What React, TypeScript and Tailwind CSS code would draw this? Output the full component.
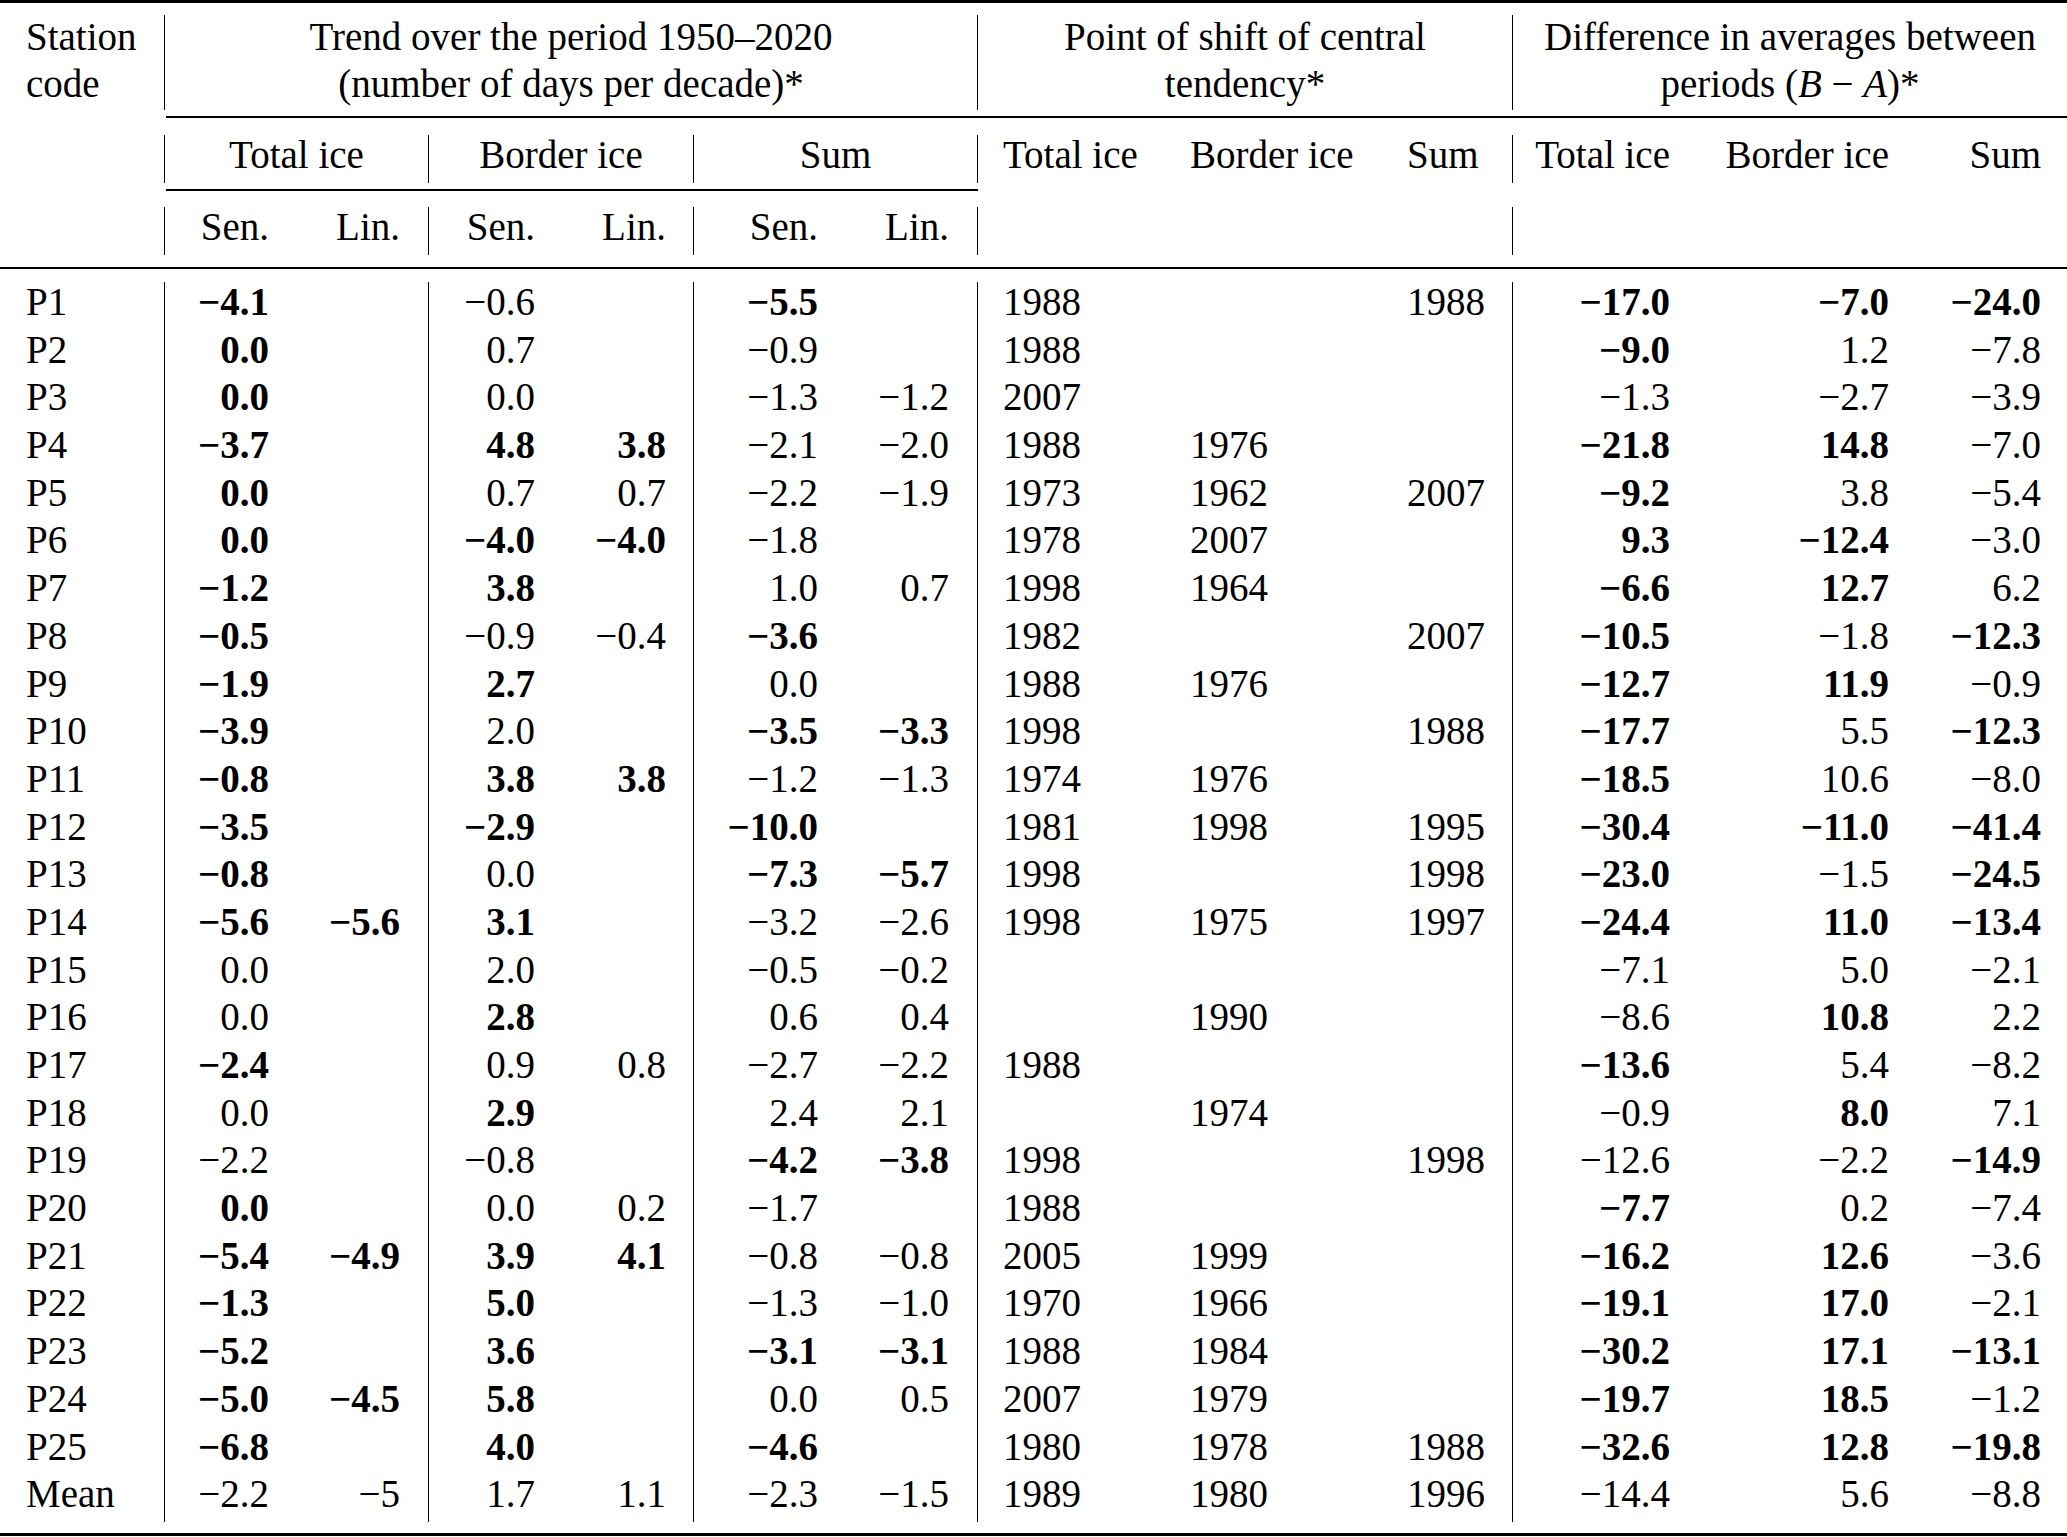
import React from "react";

// column widths follow the bars in the reference: 164 | 428 | 693 | 977 | 1512
const COLS =
  "grid grid-cols-[164px_136px_128px_137px_128px_155px_129px_188px_215px_132px_188px_218px_149px]";
const BAR = "border-l border-black";

// "*" marks a bold value, "-" is printed as a minus sign
const rows = [
  "P1|*-4.1||-0.6||*-5.5||1988||1988|*-17.0|*-7.0|*-24.0",
  "P2|*0.0||0.7||-0.9||1988|||*-9.0|1.2|-7.8",
  "P3|*0.0||0.0||-1.3|-1.2|2007|||-1.3|-2.7|-3.9",
  "P4|*-3.7||*4.8|*3.8|-2.1|-2.0|1988|1976||*-21.8|*14.8|-7.0",
  "P5|*0.0||0.7|0.7|-2.2|-1.9|1973|1962|2007|*-9.2|3.8|-5.4",
  "P6|*0.0||*-4.0|*-4.0|-1.8||1978|2007||*9.3|*-12.4|-3.0",
  "P7|*-1.2||*3.8||1.0|0.7|1998|1964||*-6.6|*12.7|6.2",
  "P8|*-0.5||-0.9|-0.4|*-3.6||1982||2007|*-10.5|-1.8|*-12.3",
  "P9|*-1.9||*2.7||0.0||1988|1976||*-12.7|*11.9|-0.9",
  "P10|*-3.9||2.0||*-3.5|*-3.3|1998||1988|*-17.7|5.5|*-12.3",
  "P11|*-0.8||*3.8|*3.8|-1.2|-1.3|1974|1976||*-18.5|10.6|-8.0",
  "P12|*-3.5||*-2.9||*-10.0||1981|1998|1995|*-30.4|*-11.0|*-41.4",
  "P13|*-0.8||0.0||*-7.3|*-5.7|1998||1998|*-23.0|-1.5|*-24.5",
  "P14|*-5.6|*-5.6|*3.1||-3.2|-2.6|1998|1975|1997|*-24.4|*11.0|*-13.4",
  "P15|0.0||2.0||-0.5|-0.2||||-7.1|5.0|-2.1",
  "P16|0.0||*2.8||0.6|0.4||1990||-8.6|*10.8|2.2",
  "P17|*-2.4||0.9|0.8|-2.7|-2.2|1988|||*-13.6|5.4|-8.2",
  "P18|0.0||*2.9||2.4|2.1||1974||-0.9|*8.0|7.1",
  "P19|-2.2||-0.8||*-4.2|*-3.8|1998||1998|-12.6|-2.2|*-14.9",
  "P20|*0.0||0.0|0.2|-1.7||1988|||*-7.7|0.2|-7.4",
  "P21|*-5.4|*-4.9|*3.9|*4.1|-0.8|-0.8|2005|1999||*-16.2|*12.6|-3.6",
  "P22|*-1.3||*5.0||-1.3|-1.0|1970|1966||*-19.1|*17.0|-2.1",
  "P23|*-5.2||*3.6||*-3.1|*-3.1|1988|1984||*-30.2|*17.1|*-13.1",
  "P24|*-5.0|*-4.5|*5.8||0.0|0.5|2007|1979||*-19.7|*18.5|-1.2",
  "P25|*-6.8||*4.0||*-4.6||1980|1978|1988|*-32.6|*12.8|*-19.8",
  "Mean|-2.2|-5|1.7|1.1|-2.3|-1.5|1989|1980|1996|-14.4|5.6|-8.8",
];

const colCls = [
  "pl-[26px] text-left",
  `${BAR} pr-[31px] text-right`,
  "pr-[28px] text-right",
  `${BAR} pr-[30px] text-right`,
  "pr-[27px] text-right",
  `${BAR} pr-[30px] text-right`,
  "pr-[28px] text-right",
  `${BAR} pl-[25px] text-left`,
  "pl-[25px] text-left",
  "pl-[27px] text-left",
  `${BAR} pr-[30px] text-right`,
  "pr-[29px] text-right",
  "pr-[26px] text-right",
];

function BodyRow({ line }: { line: string }) {
  const cells = line.split("|");
  return (
    <div className={COLS}>
      {cells.map((v, i) => {
        const bold = v.startsWith("*");
        const text = (bold ? v.slice(1) : v).replace(/-/g, "\u2212");
        return (
          <div
            key={i}
            className={`${colCls[i]} h-[47.7px] leading-[40.7px] whitespace-nowrap ${
              bold ? "font-bold" : ""
            }`}
          >
            {text}
          </div>
        );
      })}
    </div>
  );
}

function Head({ className, children }: { className: string; children?: React.ReactNode }) {
  return (
    <div className={`${className} h-[48px] leading-[40.7px] whitespace-nowrap`}>
      {children}
    </div>
  );
}

export default function App() {
  return (
    <div className="w-[2067px] min-h-[1537px] bg-white text-black font-['Liberation_Serif',serif] text-[39px]">
      <div className="h-[3px] bg-black" />

      <div className={`${COLS} mt-[12px]`}>
        <div className="h-[95px] pl-[26px]">
          <div className="leading-[46.7px] -translate-y-[1.5px]">
            Station
            <br />
            code
          </div>
        </div>
        <div className={`col-span-6 ${BAR} h-[95px] text-center`}>
          <div className="leading-[46.7px] -translate-y-[1.5px]">
            Trend over the period 1950–2020
            <br />
            (number of days per decade)*
          </div>
        </div>
        <div className={`col-span-3 ${BAR} h-[95px] text-center`}>
          <div className="leading-[46.7px] -translate-y-[1.5px]">
            Point of shift of central
            <br />
            tendency*
          </div>
        </div>
        <div className={`col-span-3 ${BAR} h-[95px] text-center`}>
          <div className="leading-[46.7px] -translate-y-[1.5px]">
            Difference in averages between
            <br />
            periods (<i>B</i> − <i>A</i>)*
          </div>
        </div>
      </div>

      <div className="pt-[6px] pb-[17px]">
        <div className="ml-[166px] h-[2px] bg-black" />
      </div>

      <div className={COLS}>
        <Head className="" />
        <Head className={`col-span-2 ${BAR} text-center`}>Total ice</Head>
        <Head className={`col-span-2 ${BAR} text-center`}>Border ice</Head>
        <Head className={`col-span-2 ${BAR} text-center`}>Sum</Head>
        <Head className={colCls[7]}>Total ice</Head>
        <Head className={colCls[8]}>Border ice</Head>
        <Head className={colCls[9]}>Sum</Head>
        <Head className={colCls[10]}>Total ice</Head>
        <Head className={colCls[11]}>Border ice</Head>
        <Head className={colCls[12]}>Sum</Head>
      </div>

      <div className="pt-[6px] pb-[16px]">
        <div className="ml-[166px] w-[812px] h-[2px] bg-black" />
      </div>

      <div className={COLS}>
        <Head className="" />
        <Head className={colCls[1]}>Sen.</Head>
        <Head className={colCls[2]}>Lin.</Head>
        <Head className={colCls[3]}>Sen.</Head>
        <Head className={colCls[4]}>Lin.</Head>
        <Head className={colCls[5]}>Sen.</Head>
        <Head className={colCls[6]}>Lin.</Head>
        <Head className={colCls[7]} />
        <Head className={colCls[8]} />
        <Head className={colCls[9]} />
        <Head className={colCls[10]} />
        <Head className={colCls[11]} />
        <Head className={colCls[12]} />
      </div>

      <div className="pt-[12px] pb-[13px]">
        <div className="h-[2px] bg-black" />
      </div>

      {rows.map((r) => (
        <BodyRow key={r} line={r} />
      ))}

      <div className="pt-[11px]">
        <div className="h-[3px] bg-black" />
      </div>
    </div>
  );
}
